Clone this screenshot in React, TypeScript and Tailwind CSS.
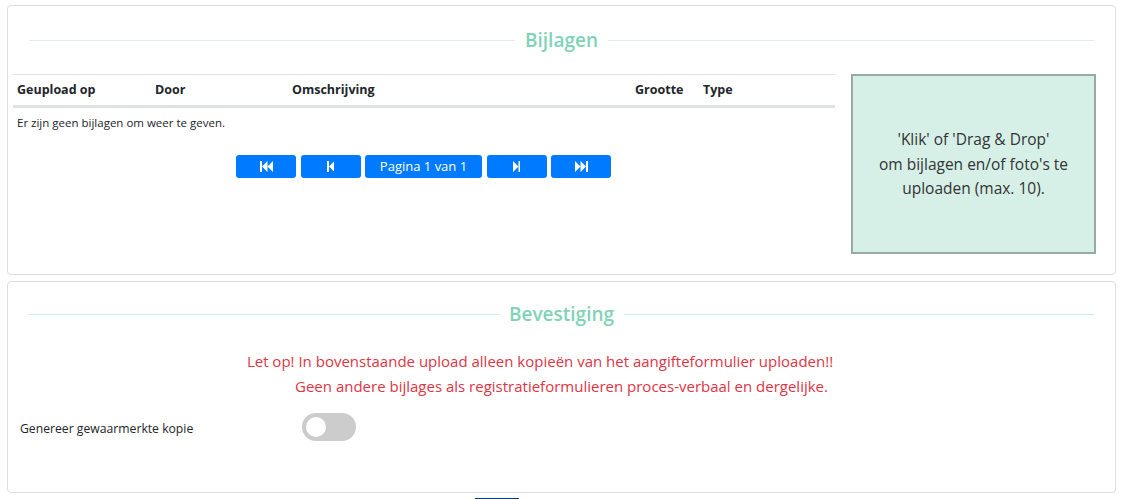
import React, { useState } from "react";

const font = { fontFamily: '"Open Sans", "Noto Sans", Arial, sans-serif' };

function SectionTitle({ children, line }: { children: React.ReactNode; line: string }) {
  return (
    <div className="flex items-center px-[21px]">
      <div className={`h-px flex-1 ${line}`} />
      <h2 className="px-[10px] text-[19px] font-semibold leading-6 text-[#7fd3b6]">{children}</h2>
      <div className={`h-px flex-1 ${line}`} />
    </div>
  );
}

function NavIcon({ kind }: { kind: "first" | "prev" | "next" | "last" }) {
  const paths: Record<string, string> = {
    first: "M0 0h2v11H0zM2 5.5l5.5-5.5v11zM7.5 5.5l5.5-5.5v11z",
    prev: "M0 0h2v11H0zM2 5.5l5.5-5.5v11z",
    next: "M0 0l5.5 5.5L0 11zM5.5 0h2v11h-2z",
    last: "M0 0l5.5 5.5L0 11zM5.5 0l5.5 5.5-5.5 5.5zM11 0h2v11h-2z",
  };
  const w = kind === "first" || kind === "last" ? 13 : 7.5;
  return (
    <svg width={w} height={11} viewBox={`0 0 ${w} 11`} fill="white">
      <path d={paths[kind]} />
    </svg>
  );
}

function PageButton({ children, wide }: { children: React.ReactNode; wide?: boolean }) {
  return (
    <button
      className={`flex h-[23px] items-center justify-center rounded-[3px] bg-[#007bff] text-[13px] text-white ${
        wide ? "w-[117px]" : "w-[60px]"
      }`}
    >
      {children}
    </button>
  );
}

export default function App() {
  const [on, setOn] = useState(false);
  return (
    <div className="min-h-[499px] bg-white pt-[5px] text-[#212529]" style={font}>
      {/* Bijlagen */}
      <section className="ml-[7px] h-[270px] w-[1109px] rounded-[4px] border border-[#dedede]">
        <div className="pt-[22px]">
          <SectionTitle line="bg-[#e2ebea]">Bijlagen</SectionTitle>
        </div>
        <div className="mt-[22px] flex gap-[16px] pl-[5px] pr-[19px]">
          <div className="w-[822px]">
            <table className="w-full border-t border-[#dee2e6] text-left text-[12.5px]">
              <thead>
                <tr className="border-b-[3px] border-[#dee2e6]">
                  <th className="w-[142px] pt-[6px] pb-[5px] pl-[4px] font-bold">Geupload op</th>
                  <th className="w-[137px] font-bold">Door</th>
                  <th className="w-[343px] font-bold">Omschrijving</th>
                  <th className="w-[68px] font-bold">Grootte</th>
                  <th className="font-bold">Type</th>
                </tr>
              </thead>
              <tbody>
                <tr>
                  <td colSpan={5} className="pt-[6px] pl-[4px] text-[11.5px]">
                    Er zijn geen bijlagen om weer te geven.
                  </td>
                </tr>
              </tbody>
            </table>
            <div className="mt-[24px] flex justify-center gap-[4.5px] pr-[1px]">
              <PageButton>
                <NavIcon kind="first" />
              </PageButton>
              <PageButton>
                <NavIcon kind="prev" />
              </PageButton>
              <PageButton wide>Pagina 1 van 1</PageButton>
              <PageButton>
                <NavIcon kind="next" />
              </PageButton>
              <PageButton>
                <NavIcon kind="last" />
              </PageButton>
            </div>
          </div>
          <div className="flex h-[180px] w-[245px] items-center justify-center border-2 border-[#97aba4] bg-[#d6f0e8] text-center text-[15.5px] leading-[24.5px] text-[#333]">
            <p>
              'Klik' of 'Drag &amp; Drop'
              <br />
              om bijlagen en/of foto's te
              <br />
              uploaden (max. 10).
            </p>
          </div>
        </div>
      </section>

      {/* Bevestiging */}
      <section className="ml-[7px] mt-[6px] h-[212px] w-[1109px] rounded-[4px] border border-[#dedede]">
        <div className="pt-[20px]">
          <SectionTitle line="bg-[#cdeee2]">Bevestiging</SectionTitle>
        </div>
        <div className="mt-[23px] text-center text-[15px] leading-[25px] text-[#dc3545]">
          <p className="pr-[43px]">
            Let op! In bovenstaande upload alleen kopieën van het aangifteformulier uploaden!!
          </p>
          <p>Geen andere bijlages als registratieformulieren proces-verbaal en dergelijke.</p>
        </div>
        <div className="mt-[14px] flex items-center pl-[12px]">
          <span className="w-[282px] pt-[4px] text-[12.2px]">Genereer gewaarmerkte kopie</span>
          <button
            onClick={() => setOn((v) => !v)}
            className={`relative h-[28px] w-[54px] rounded-full ${on ? "bg-[#7fd3b6]" : "bg-[#cccccc]"}`}
            aria-label="Genereer gewaarmerkte kopie"
          >
            <span
              className={`absolute top-[4px] h-[20px] w-[20px] rounded-full bg-white ${
                on ? "left-[30px]" : "left-[4px]"
              }`}
            />
          </button>
        </div>
      </section>

      <div className="ml-[475px] mt-[5px] h-[3px] w-[44px] bg-[#0b3d6b]" />
    </div>
  );
}
